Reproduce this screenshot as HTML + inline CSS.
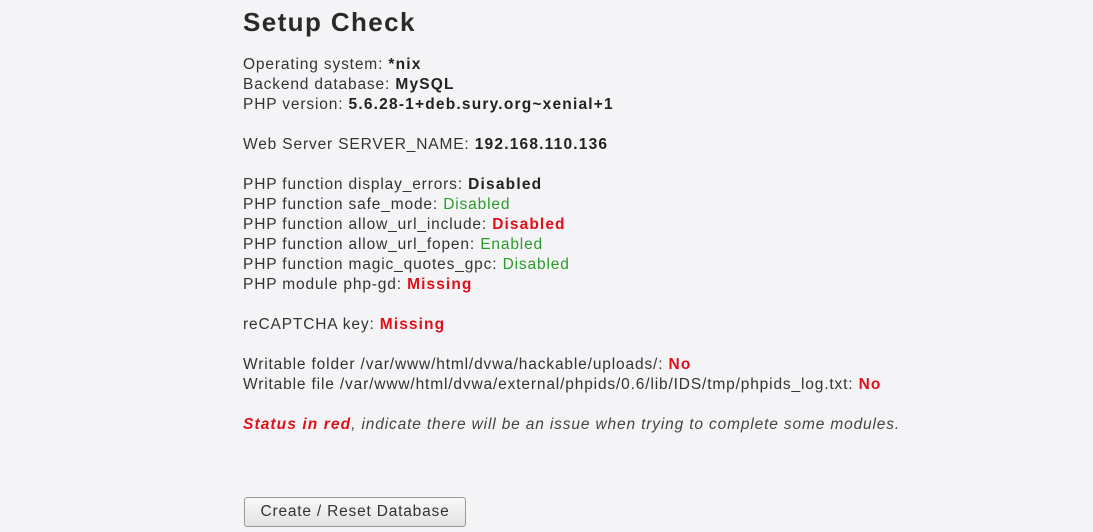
<!DOCTYPE html>
<html><head><style>
body{margin:0;background:#f4f4f6;font-family:"Liberation Sans",Arial,sans-serif;color:#333;width:1093px;height:532px;overflow:hidden;position:relative}
h1{position:absolute;left:243px;top:5px;margin:0;font-size:26px;font-weight:bold;color:#2a2a2a;line-height:34px;letter-spacing:1.4px}
.c{position:absolute;left:243px;top:55px;font-size:15.5px;line-height:20px;letter-spacing:0.85px}
b{color:#222;letter-spacing:1.2px}
.g{color:#2a9a2a}
.r{color:#e0101a;font-weight:bold;letter-spacing:1.1px}
i{color:#444}
button{position:absolute;left:244px;top:497px;width:222px;height:30px;font-family:"Liberation Sans",Arial,sans-serif;font-size:15.5px;letter-spacing:0.8px;color:#333;background:linear-gradient(#f8f8f8,#e2e2e2);border:1px solid #999;border-radius:3px}
</style></head><body>
<h1>Setup Check</h1>
<div class="c">
Operating system: <b>*nix</b><br>
Backend database: <b>MySQL</b><br>
PHP version: <b>5.6.28-1+deb.sury.org~xenial+1</b><br><br>
Web Server SERVER_NAME: <b>192.168.110.136</b><br><br>
PHP function display_errors: <b>Disabled</b><br>
PHP function safe_mode: <span class="g">Disabled</span><br>
PHP function allow_url_include: <span class="r">Disabled</span><br>
PHP function allow_url_fopen: <span class="g">Enabled</span><br>
PHP function magic_quotes_gpc: <span class="g">Disabled</span><br>
PHP module php-gd: <span class="r">Missing</span><br><br>
reCAPTCHA key: <span class="r">Missing</span><br><br>
Writable folder /var/www/html/dvwa/hackable/uploads/: <span class="r">No</span><br>
Writable file /var/www/html/dvwa/external/phpids/0.6/lib/IDS/tmp/phpids_log.txt: <span class="r">No</span><br><br>
<i><span class="r">Status in red</span>, indicate there will be an issue when trying to complete some modules.</i>
</div>
<button>Create / Reset Database</button>
</body></html>
